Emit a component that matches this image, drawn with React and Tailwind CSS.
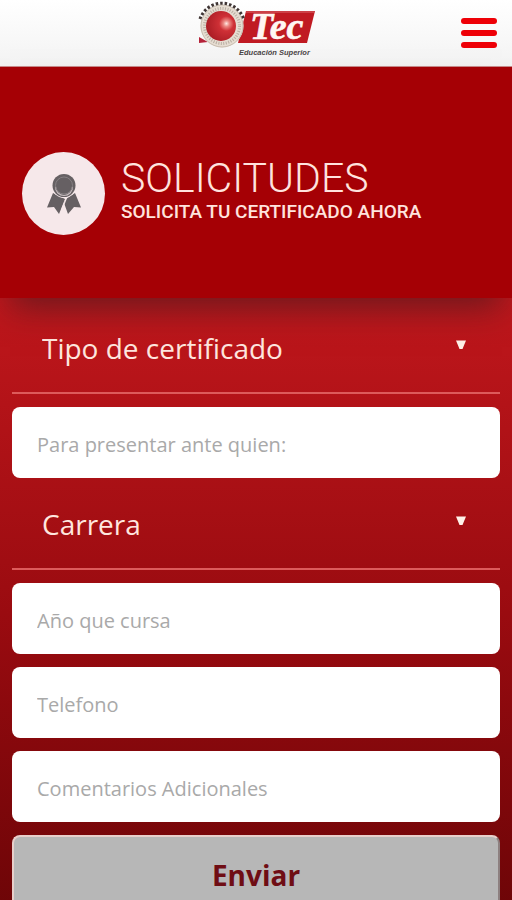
import { useState } from "react"

const TIPOS = ["Tipo de certificado", "Alumno regular", "Notas", "Título"];
const CARRERAS = ["Carrera", "Administración", "Contabilidad", "Informática"];

const Logo = () => {
    return (
        <svg viewBox="0 0 120 60" className="h-[60px] w-[120px]" role="img" aria-label="Tec Educación Superior">
            <defs>
                <radialGradient id="ball" cx="0.68" cy="0.42" r="0.7">
                    <stop offset="0" stopColor="#ffe9e4" />
                    <stop offset="0.14" stopColor="#ec8a84" />
                    <stop offset="0.35" stopColor="#cf3036" />
                    <stop offset="1" stopColor="#a91c24" />
                </radialGradient>
            </defs>
            <path d="M50 11H119L111 43H42Z" fill="#c01a22" />
            <path d="M50 12H118.500" stroke="#d9696c" strokeWidth="1" />
            <path d="M3 37V43L12 42Z" fill="#b5233a" />
            <circle cx="26" cy="26" r="21.500" fill="#e6ddd2" />
            <circle cx="26" cy="26" r="21" fill="none" stroke="#c9beb1" strokeWidth="1" />
            <circle cx="26" cy="26" r="17.500" fill="none" stroke="#b9afa3" strokeWidth="3" strokeDasharray="1 1.500" />
            <path d="M4 19A23 23 0 0 1 48 20" fill="none" stroke="#3f3534" strokeWidth="3" strokeDasharray="2.500 2" />
            <circle cx="25" cy="26" r="15" fill="url(#ball)" />
            <text x="54" y="39" fontFamily="'Liberation Serif', serif" fontWeight="700" fontStyle="italic" fontSize="38" fill="#fff6f2" stroke="#fff6f2" strokeWidth="0.600">Tec</text>
            <text x="43" y="55" fontFamily="'Liberation Sans', sans-serif" fontWeight="700" fontStyle="italic" fontSize="7.500" fill="#4b4546">Educación Superior</text>
        </svg>
    )
}

const AwardIcon = () => {
    return (
        <svg viewBox="0 0 34 42" className="h-[42px] w-[34px]" aria-hidden="true">
            <path d="M6 20L0 34.500L7 34L12 41L18 26Z" fill="#666063" />
            <path d="M28 20L34 34.500L27 34L21 41L17 30L19 26Z" fill="#666063" />
            <path d="M19.500 25L15 36" stroke="#f6e8ea" strokeWidth="1.200" />
            <circle cx="17" cy="12.500" r="12.500" fill="#f6e8ea" />
            <circle cx="17" cy="12.500" r="11.500" fill="#666063" />
            <path d="M8.500 14A8.500 8.500 0 0 0 25.500 14" fill="none" stroke="#c9bec1" strokeWidth="1.200" />
            <circle cx="17" cy="12.500" r="8.500" fill="none" stroke="#857f82" strokeWidth="1" />
        </svg>
    )
}

const SelectField = ({ label, options }) => {
    const [value, setValue] = useState(options[0]);

    return (
        <div className="relative border-b-2 border-[#dd5b5b]">
            <select
                aria-label={label}
                value={value}
                onChange={(e) => setValue(e.target.value)}
                className="block h-[88px] w-full appearance-none bg-transparent px-[30px] text-[28px] font-medium text-[#ffe6df] focus:outline-none"
            >
                {options.map((option) => (
                    <option key={option} value={option} className="text-black">{option}</option>
                ))}
            </select>
            <svg viewBox="0 0 10 10" className="pointer-events-none absolute right-[34px] top-[36px] size-[10px]" aria-hidden="true">
                <path d="M0 0.500H10L6.500 9H3.500Z" fill="#fff1e8" />
            </svg>
        </div>
    )
}

const TextField = ({ label }) => {
    return (
        <input
            type="text"
            aria-label={label}
            placeholder={label}
            className="block h-[71px] w-full rounded-lg bg-white px-[25px] pt-1 text-[20px] text-neutral-700 placeholder-[#a9a9a9] focus:outline-none"
        />
    )
}

const App = () => {
    const handleSubmit = (e) => {
        e.preventDefault();
    }

    return (
        <div className="flex min-h-screen flex-col font-['Open_Sans','Noto_Sans',sans-serif]">
            <header className="grid h-[67px] grid-cols-3 items-start border-b border-[#c98c8c] bg-linear-to-b from-white to-[#f3f3f3]">
                <a href="#" className="col-start-2 justify-self-center">
                    <Logo />
                </a>
                <button type="button" aria-label="Menu" className="mr-[15px] mt-[18px] flex w-9 flex-col gap-[6px] justify-self-end">
                    <span className="h-[6px] rounded-full bg-[#ee0007]"></span>
                    <span className="h-[6px] rounded-full bg-[#ee0007]"></span>
                    <span className="h-[6px] rounded-full bg-[#ee0007]"></span>
                </button>
            </header>

            {/* Title banner */}
            <section className="z-10 flex items-start gap-4 bg-[#a50005] px-[22px] pb-[63px] pt-[85px] font-[Roboto,sans-serif] text-[#ffe3de] shadow-[0_20px_32px_-10px_rgba(80,25,30,0.75)]">
                <div className="flex size-[83px] shrink-0 items-center justify-center rounded-full bg-[#f6e8ea]">
                    <AwardIcon />
                </div>
                <div className="pt-1">
                    <h1 className="text-[41px] font-light leading-[44px]">SOLICITUDES</h1>
                    <p className="text-[19px] font-medium leading-6">SOLICITA TU CERTIFICADO AHORA</p>
                </div>
            </section>

            <form onSubmit={handleSubmit} className="flex grow flex-col gap-[13px] bg-linear-to-b from-[#c0171c] via-[#9a0b10] to-[#6b0507] px-3 pb-3 pt-[6px]">
                <div className="flex flex-col gap-[13px]">
                    <SelectField label="Tipo de certificado" options={TIPOS} />
                    <TextField label="Para presentar ante quien:" />
                </div>
                <div className="-mt-[11px] flex flex-col gap-[13px]">
                    <SelectField label="Carrera" options={CARRERAS} />
                    <TextField label="Año que cursa" />
                    <TextField label="Telefono" />
                    <TextField label="Comentarios Adicionales" />
                </div>
                <button type="submit" className="h-20 rounded-lg border-2 border-b-[#8d8080] border-l-[#e8cfcb] border-r-[#8d8080] border-t-[#e8cfcb] bg-[#b7b7b7] text-[28px] font-bold text-[#6f0d14]">
                    Enviar
                </button>
            </form>
        </div>
    )
}

export default App
